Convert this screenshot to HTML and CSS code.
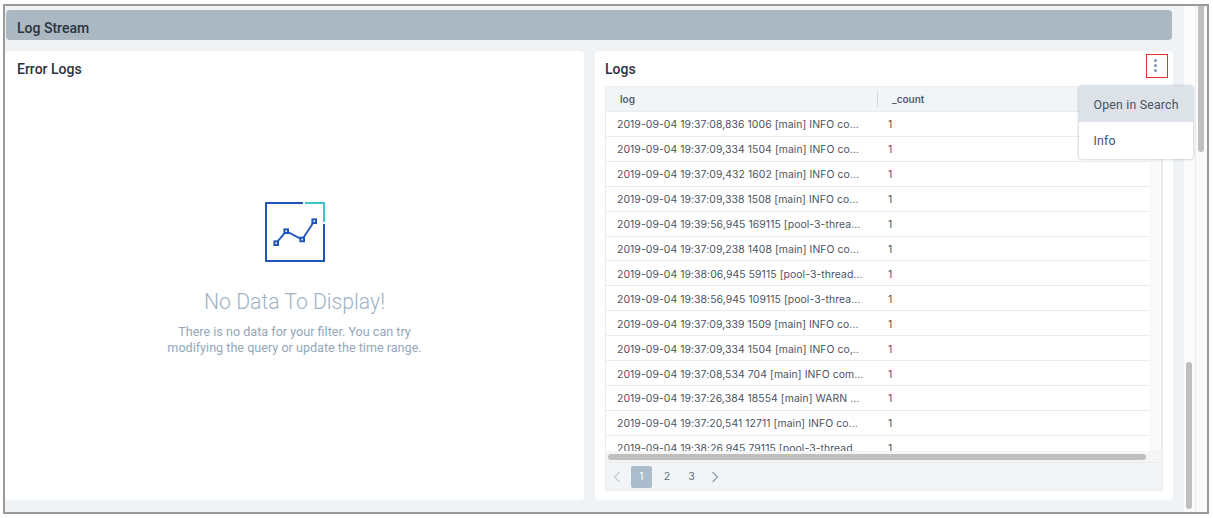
FILE: index.html
```html
<!DOCTYPE html>
<html lang="en">
<head>
<meta charset="utf-8">
<title>Log Stream</title>
<link rel="stylesheet" href="styles.css">
</head>
<body>
<div class="frame">
  <main class="dashboard">
    <header class="section-bar">Log Stream</header>
    <div class="panels">
      <section class="panel panel-left">
        <h2 class="panel-title">Error Logs</h2>
        <div class="empty">
          <svg class="empty-icon" width="62" height="62" viewBox="0 0 62 62" fill="none">
            <path d="M39 2H2V60H60V23" stroke="#1f55b8" stroke-width="2"/>
            <path d="M41 2H60V21" stroke="#3cc4c9" stroke-width="2"/>
            <path d="M12.2 42.2L22.2 30.2L38.2 38.5L50.2 20.2" stroke="#1f55b8" stroke-width="1.8"/>
            <rect x="10.4" y="40.4" width="3.6" height="3.6" fill="#fff" stroke="#1f55b8" stroke-width="2"/>
            <rect x="20.4" y="28.4" width="3.6" height="3.6" fill="#fff" stroke="#1f55b8" stroke-width="2"/>
            <rect x="36.4" y="36.7" width="3.6" height="3.6" fill="#fff" stroke="#1f55b8" stroke-width="2"/>
            <rect x="48.4" y="18.4" width="3.6" height="3.6" fill="#fff" stroke="#1f55b8" stroke-width="2"/>
          </svg>
          <div class="empty-title">No Data To Display!</div>
          <p class="empty-text">There is no data for your filter. You can try<br>modifying the query or update the time range.</p>
        </div>
      </section>
      <section class="panel panel-right">
        <div class="panel-head">
          <h2 class="panel-title">Logs</h2>
          <button class="kebab" aria-label="More">
            <span class="dot"></span><span class="dot"></span><span class="dot"></span>
          </button>
        </div>
        <div class="table">
          <div class="table-main">
            <div class="table-scroll">
              <div class="row head"><div class="cell c-log">log</div><div class="cell c-count">_count</div></div>
              <div class="rows">
                <div class="row"><div class="cell c-log">2019-09-04 19:37:08,836 1006 [main] INFO co...</div><div class="cell c-count">1</div></div>
                <div class="row"><div class="cell c-log">2019-09-04 19:37:09,334 1504 [main] INFO co...</div><div class="cell c-count">1</div></div>
                <div class="row"><div class="cell c-log">2019-09-04 19:37:09,432 1602 [main] INFO co...</div><div class="cell c-count">1</div></div>
                <div class="row"><div class="cell c-log">2019-09-04 19:37:09,338 1508 [main] INFO co...</div><div class="cell c-count">1</div></div>
                <div class="row"><div class="cell c-log">2019-09-04 19:39:56,945 169115 [pool-3-threa...</div><div class="cell c-count">1</div></div>
                <div class="row"><div class="cell c-log">2019-09-04 19:37:09,238 1408 [main] INFO co...</div><div class="cell c-count">1</div></div>
                <div class="row"><div class="cell c-log">2019-09-04 19:38:06,945 59115 [pool-3-thread...</div><div class="cell c-count">1</div></div>
                <div class="row"><div class="cell c-log">2019-09-04 19:38:56,945 109115 [pool-3-threa...</div><div class="cell c-count">1</div></div>
                <div class="row"><div class="cell c-log">2019-09-04 19:37:09,339 1509 [main] INFO co...</div><div class="cell c-count">1</div></div>
                <div class="row"><div class="cell c-log">2019-09-04 19:37:09,334 1504 [main] INFO co,..</div><div class="cell c-count">1</div></div>
                <div class="row"><div class="cell c-log">2019-09-04 19:37:08,534 704 [main] INFO com...</div><div class="cell c-count">1</div></div>
                <div class="row"><div class="cell c-log">2019-09-04 19:37:26,384 18554 [main] WARN ...</div><div class="cell c-count">1</div></div>
                <div class="row"><div class="cell c-log">2019-09-04 19:37:20,541 12711 [main] INFO co...</div><div class="cell c-count">1</div></div>
                <div class="row"><div class="cell c-log">2019-09-04 19:38:26,945 79115 [pool-3-thread...</div><div class="cell c-count">1</div></div>
              </div>
            </div>
            <div class="vtrack"></div>
          </div>
          <div class="htrack"><div class="hthumb"></div></div>
          <div class="pager">
            <svg class="chev" width="8" height="12" viewBox="0 0 8 12" fill="none"><path d="M6.5 1L1.5 6L6.5 11" stroke="#c3ced8" stroke-width="1.3"/></svg>
            <span class="page current">1</span>
            <span class="page">2</span>
            <span class="page">3</span>
            <svg class="chev" width="8" height="12" viewBox="0 0 8 12" fill="none"><path d="M1.5 1L6.5 6L1.5 11" stroke="#8fa3b6" stroke-width="1.3"/></svg>
          </div>
        </div>
        <div class="menu">
          <div class="menu-item active">Open in Search</div>
          <div class="menu-item">Info</div>
        </div>
      </section>
    </div>
  </main>
  <div class="inner-scroll"><div class="inner-thumb"></div></div>
  <div class="outer-scroll"><div class="outer-thumb"></div></div>
</div>
</body>
</html>
```
FILE: styles.css
```css
* { box-sizing: border-box; }
html, body { margin: 0; height: 100%; background: #fff; overflow: hidden; }
body { padding: 4px 3px 4px 3px; font-family: Roboto, "Liberation Sans", sans-serif; color: #2b3542; }

.frame {
  display: flex;
  width: 1206px;
  height: 510px;
  border: 2px solid #9a9a9a;
  background: #fff;
}

.dashboard {
  width: 1179px;
  flex: none;
  background: #eff3f5;
  padding: 4px 0 0 0;
  display: flex;
  flex-direction: column;
}

.section-bar {
  height: 30px;
  margin: 0 12px 0 1px;
  padding-left: 11px;
  background: #abb8c1;
  border-radius: 4px;
  font-size: 14px;
  font-weight: 500;
  line-height: 36px;
  color: #2a3340;
}

.panels {
  display: flex;
  gap: 11px;
  margin-top: 11px;
  height: 449px;
}

.panel {
  background: #fff;
  border-radius: 4px;
  position: relative;
}
.panel-left { width: 579px; padding: 10px 12px 0; display: flex; flex-direction: column; }
.panel-right { width: 578px; padding: 4px 10px 0; }

.panel-title {
  margin: 0;
  font-size: 14px;
  font-weight: 500;
  line-height: 16px;
  color: #2a3340;
}

.empty { display: flex; flex-direction: column; align-items: center; }
.empty-icon { margin-top: 124px; }
.empty-title {
  margin-top: 26px;
  font-size: 21.2px;
  font-weight: 300;
  line-height: 26px;
  color: #a0b2c4;
}
.empty-text {
  margin: 9px 0 0;
  font-size: 12.6px;
  line-height: 16px;
  text-align: center;
  color: #93a8bc;
}

.panel-head {
  height: 31px;
  display: flex;
  align-items: flex-start;
  justify-content: space-between;
  margin-right: -5px;
}
.panel-head .panel-title { margin-top: 6px; }

.kebab {
  width: 22px;
  height: 24px;
  margin-top: -1px;
  border: 1.5px solid #e2332b;
  background: #fff;
  padding: 0 3px 1px 0;
  display: flex;
  flex-direction: column;
  align-items: center;
  justify-content: center;
  gap: 1.5px;
}
.dot { width: 3.5px; height: 3.5px; border-radius: 50%; background: #7e97b0; }

.table { width: 558px; border: 1px solid #e8edf1; }
.table-main { display: flex; height: 364px; }
.table-scroll { width: 545px; overflow: hidden; }
.vtrack { width: 12px; background: #fafafa; border-right: 1px solid #e9e9e9; border-left: 1px solid #f4f4f4; }

.row { display: flex; height: 24.92px; border-bottom: 1px solid #e9edf1; align-items: center; }
.row.head { background: #f2f5f8; height: 25px; width: 557px; }
.rows { height: 339px; overflow: hidden; }
.cell { font-family: Inter, Roboto, sans-serif; font-size: 10.4px; letter-spacing: 0.08px; padding-top: 2px; color: #4a5461; white-space: nowrap; }
.head .cell { font-size: 10px; font-weight: 600; color: #4d5f72; letter-spacing: 0; padding-top: 0; }
.c-log { width: 272px; padding-left: 11px; flex: none; }
.c-count { padding-left: 10px; }
.head .c-log { padding-left: 14px; width: 271px; }
.head .c-count { padding-left: 14px; height: 16px; line-height: 16px; border-left: 1px solid #d2dae1; }

.htrack { height: 12px; background: #f5f5f5; padding: 3px 0 0 2px; border-bottom: 1px solid #e8edf1; }
.hthumb { width: 538px; height: 6px; border-radius: 3px; background: #bfbfbf; }

.pager {
  height: 27px;
  background: #f2f5f8;
  display: flex;
  align-items: center;
  padding-left: 6px;
  font-family: Inter, Roboto, sans-serif;
  font-size: 10.5px;
  color: #5c6f82;
}
.page { width: 21px; height: 22px; margin-right: 3.5px; display: flex; align-items: center; justify-content: center; border-radius: 2px; }
.page.current { background: #abbccc; color: #fff; margin-right: 4.5px; }
.pager .chev:first-child { margin-right: 10px; margin-left: 1px; }
.pager .chev:last-child { margin-left: 5px; }

.menu {
  position: absolute;
  left: 484px;
  top: 35px;
  width: 114px;
  height: 73px;
  background: #fff;
  border-radius: 3px;
  box-shadow: 0 0 3px rgba(90, 115, 140, 0.55);
  z-index: 2;
  font-size: 12.3px;
  letter-spacing: 0.2px;
  color: #48535f;
}
.menu-item { height: 36px; line-height: 38px; padding-left: 14.5px; }
.menu-item.active { background: #dce2e7; border-radius: 3px 3px 0 0; }

.inner-scroll { width: 12px; flex: none; background: #fbfbfb; padding: 356px 2px 0 2px; border-right: 1px solid #eee; }
.inner-thumb { width: 6px; height: 147px; border-radius: 3px; background: #bfbfbf; }
.outer-scroll { flex: 1; background: #fafafa; padding: 0 2px; }
.outer-thumb { width: 6px; height: 146px; border-radius: 0 0 3px 3px; background: #bfbfbf; }
```
